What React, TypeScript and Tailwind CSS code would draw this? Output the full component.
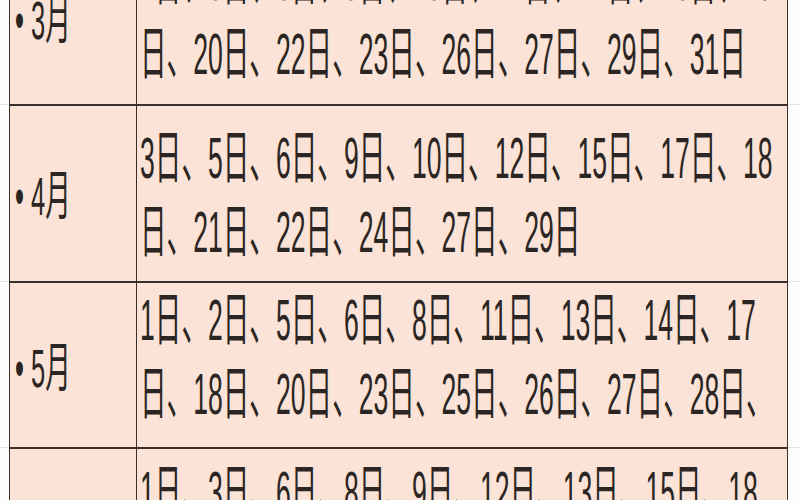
import React from "react";

type Row = {
  key: string;
  rowCls: string;
  top: boolean;
  month: string;
  monthCls: string;
  textCls: string;
  lines: string[];
};

const rows: Row[] = [
  {
    key: "r3",
    rowCls: "h-[104px]",
    top: false,
    month: "• 3月",
    monthCls: "mt-[-16px]",
    textCls: "mt-[-55px]",
    lines: [
      "1日、3日、6日、9日、10日、12日、14日、16日、19",
      "日、20日、22日、23日、26日、27日、29日、31日",
    ],
  },
  {
    key: "r4",
    rowCls: "h-[177px]",
    top: true,
    month: "• 4月",
    monthCls: "mt-[54px]",
    textCls: "mt-[17px]",
    lines: [
      "3日、5日、6日、9日、10日、12日、15日、17日、18",
      "日、21日、22日、24日、27日、29日",
    ],
  },
  {
    key: "r5",
    rowCls: "h-[166px]",
    top: true,
    month: "• 5月",
    monthCls: "mt-[49px]",
    textCls: "mt-[2px]",
    lines: [
      "1日、2日、5日、6日、8日、11日、13日、14日、17",
      "日、18日、20日、23日、25日、26日、27日、28日、",
    ],
  },
  {
    key: "r6",
    rowCls: "h-[170px]",
    top: true,
    month: "• 6月",
    monthCls: "mt-[52px]",
    textCls: "mt-[8px]",
    lines: [
      "1日、3日、6日、8日、9日、12日、13日、15日、18",
      "日、20日、22日、24日、26日、28日、30日",
    ],
  },
];

export default function App() {
  return (
    <div className="w-[800px] h-[500px] overflow-hidden bg-[#fdfdfd] font-['Liberation_Sans','Noto_Sans_CJK_SC',sans-serif] text-[#2b2623]">
      <div className="flex flex-col">
        {rows.map((r) => (
          <div key={r.key} className={`flex shrink-0 ${r.rowCls}`}>
            <div
              className={
                r.top
                  ? "w-[9px] shrink-0 border-t border-[#e4e4e4]"
                  : "w-[9px] shrink-0"
              }
            />
            <div
              className={
                r.top
                  ? "w-[127px] shrink-0 overflow-hidden bg-[#fbe4d7] border-l border-t-2 border-[#3a302b] pl-[5px]"
                  : "w-[127px] shrink-0 overflow-hidden bg-[#fbe4d7] border-l border-[#3a302b] pl-[5px]"
              }
            >
              <div
                className={`text-[25.5px] leading-[34px] whitespace-nowrap origin-top-left scale-y-[2.1] ${r.monthCls}`}
              >
                {r.month}
              </div>
            </div>
            <div
              className={
                r.top
                  ? "w-[652px] shrink-0 overflow-hidden bg-[#fbe4d7] border-l border-r border-t-2 border-[#3a302b] pl-[3px]"
                  : "w-[652px] shrink-0 overflow-hidden bg-[#fbe4d7] border-l border-r border-[#3a302b] pl-[3px]"
              }
            >
              <div
                className={`text-[26.6px] origin-top-left scale-y-[2.19] ${r.textCls}`}
              >
                {r.lines.map((l, i) => (
                  <div key={i} className="whitespace-nowrap leading-[33.8px]">
                    {l}
                  </div>
                ))}
              </div>
            </div>
            <div
              className={
                r.top
                  ? "flex-1 border-t border-[#e4e4e4]"
                  : "flex-1"
              }
            />
          </div>
        ))}
      </div>
    </div>
  );
}
